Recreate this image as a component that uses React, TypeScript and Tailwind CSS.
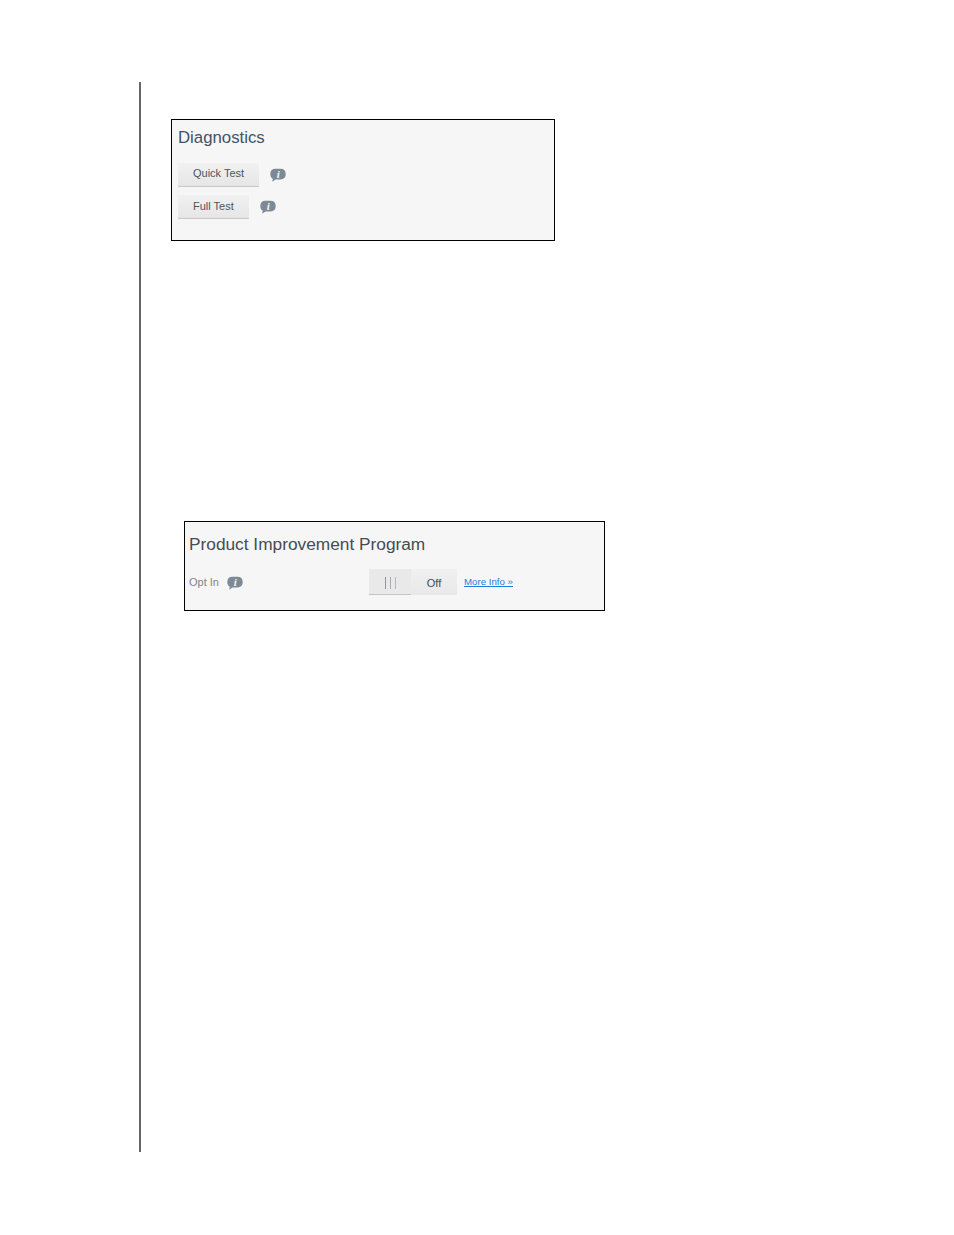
const font = "font-['Liberation_Sans',Arial,sans-serif]";

function InfoBubble() {
  return (
    <svg width="16" height="15" viewBox="0 0 16 15" className="shrink-0">
      <path d="M5.5 0.8H10.5C13.8 0.8 15.7 2.6 15.7 6C15.7 9.4 13.8 11.4 10.5 11.4H5.5L2.2 13.8L2.8 10.8C1.2 9.9 0.3 8.3 0.3 6C0.3 2.6 2.2 0.8 5.5 0.8Z" fill="#7d8a96" />
      <text x="8.2" y="10" textAnchor="middle" fontSize="11" fontWeight="700" fontStyle="italic" fill="#f5f5f5" fontFamily="'Liberation Serif', serif">
        i
      </text>
    </svg>
  );
}

function TestButton({ label, className }: { label: string; className: string }) {
  return (
    <button
      type="button"
      className={`${className} h-6 border-b border-[#c8c8c8] bg-gradient-to-b from-[#f1f1f1] to-[#e6e6e6] pl-[15px] text-left text-[11px] leading-[21px] text-[#4a5560]`}
    >
      {label}
    </button>
  );
}

export default function App() {
  return (
    <div className={`h-[1235px] w-[954px] bg-white pt-[82px] pl-[139px] ${font}`}>
      <div className="h-[1070px] border-l-2 border-[#666666] pt-[37px]">
        <section className="ml-[30px] h-[122px] w-[384px] border border-black bg-[#f6f6f6] pl-[6px] pt-[8px]">
          <h2 className="text-[16.8px] leading-5 text-[#3f5468]">Diagnostics</h2>
          <div className="mt-[15px] flex items-center gap-[11px]">
            <TestButton label="Quick Test" className="w-[81px] pb-[2px]" />
            <InfoBubble />
          </div>
          <div className="mt-[8px] flex items-center gap-[11px]">
            <TestButton label="Full Test" className="w-[71px]" />
            <InfoBubble />
          </div>
        </section>

        <section className="mt-[280px] ml-[43px] h-[90px] w-[421px] border border-black bg-[#f6f6f6] pl-[4px] pt-[11px]">
          <h2 className="text-[17.3px] leading-[22px] text-[#454c52]">Product Improvement Program</h2>
          <div className="mt-[14px] flex h-[26px] items-center">
            <span className="w-[38px] text-[11px] text-[#7f8589]">Opt In</span>
            <div className="pt-[2px]">
              <InfoBubble />
            </div>
            <div className="ml-[126px] flex h-[26px] w-[88px]">
              <div className="flex w-[42px] items-center justify-center gap-[4px] border-b border-[#c4c4c4] bg-[#e9e9e9] pt-[2px]">
                <span className="h-3 w-px bg-[#8f959a]" />
                <span className="h-3 w-px bg-[#a8adb1]" />
                <span className="h-3 w-px bg-[#b4b8bc]" />
              </div>
              <div className="flex-1 bg-gradient-to-b from-[#f0f0f0] to-[#e8e8e8] text-center text-[11px] leading-[28px] text-[#3f4a54]">
                Off
              </div>
            </div>
            <a href="#" className="ml-[7px] pt-px text-[9.7px] text-[#1a7fe0] underline">
              More Info »
            </a>
          </div>
        </section>
      </div>
    </div>
  );
}
